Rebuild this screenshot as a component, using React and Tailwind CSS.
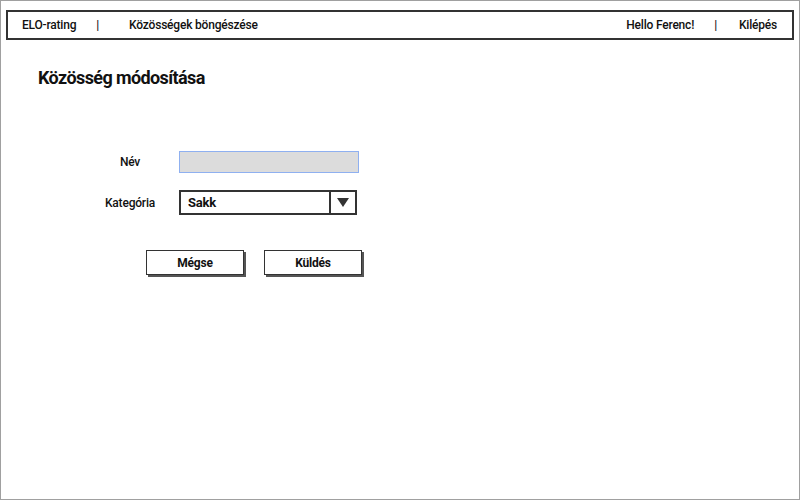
import React from 'react';

function App() {
  return (
    <div
      className="w-[800px] h-[500px] bg-white border border-[#a0a0a0] text-[#111] overflow-hidden"
      style={{ fontFamily: 'Roboto, "Liberation Sans", sans-serif' }}
    >
      {/* Top bar */}
      <div className="mx-[5px] mt-[9px] h-[30px] border-2 border-[#333] flex items-center justify-between pl-[14px] pr-[15px] text-[12px] font-medium tracking-[-0.2px]">
        <div className="flex items-center">
          <span>ELO-rating</span>
          <span className="ml-[20px]">|</span>
          <span className="ml-[30px]">Közösségek böngészése</span>
        </div>
        <div className="flex items-center">
          <span>Hello Ferenc!</span>
          <span className="ml-[20px]">|</span>
          <span className="ml-[22px]">Kilépés</span>
        </div>
      </div>

      {/* Title */}
      <h1 className="ml-[37px] mt-[25px] text-[18px] font-bold leading-[26px] tracking-[-0.6px]">
        Közösség módosítása
      </h1>

      {/* Form */}
      <div className="mt-[60px] flex flex-col gap-[17px] text-[12px] font-medium tracking-[-0.2px]">
        <div className="flex items-center">
          <label className="ml-[97px] w-[64px] text-center">Név</label>
          <input
            type="text"
            className="ml-[17px] w-[180px] h-[22px] bg-[#dcdcdc] border border-[#8fb0f0] outline-none"
          />
        </div>
        <div className="flex items-center">
          <label className="ml-[97px] w-[64px] text-center">Kategória</label>
          <div className="ml-[17px] w-[178px] h-[25px] border-2 border-[#333] flex items-center">
            <span className="flex-1 pl-[7px] text-[13px] font-bold">Sakk</span>
            <div className="w-[26px] h-full border-l-2 border-[#333] flex items-center justify-center">
              <svg width="12" height="9" viewBox="0 0 12 9">
                <path d="M0 0 L12 0 L6 9 Z" fill="#333" />
              </svg>
            </div>
          </div>
        </div>
      </div>

      {/* Buttons */}
      <div className="mt-[35px] ml-[145px] flex gap-[20px] tracking-[-0.2px]">
        <button className="w-[98px] h-[25px] bg-white border border-[#333] shadow-[2px_2px_0_#555] text-[12px] font-bold">
          Mégse
        </button>
        <button className="w-[98px] h-[25px] bg-white border border-[#333] shadow-[2px_2px_0_#555] text-[12px] font-bold">
          Küldés
        </button>
      </div>
    </div>
  );
}

export default App;
